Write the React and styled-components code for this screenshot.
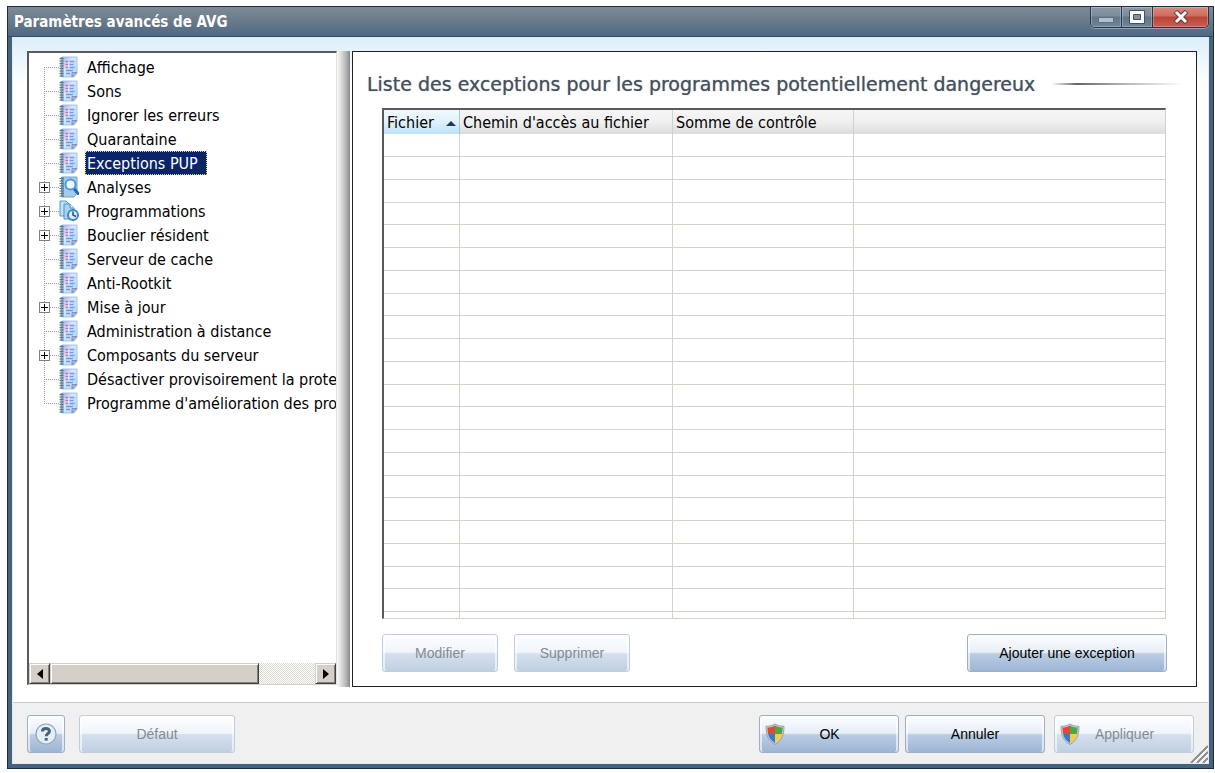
import React, { useState } from "react"
import styled, { createGlobalStyle, css } from "styled-components"

const GlobalStyle = createGlobalStyle`
  * {
    box-sizing: border-box;
  }
  body {
    margin: 0;
    background: #fff;
    font-family: "DejaVu Sans Condensed", "DejaVu Sans", Tahoma, sans-serif;
    font-size: 16px;
    color: #000;
  }
  button {
    font: inherit;
    color: inherit;
    padding: 0;
    margin: 0;
  }
  svg {
    flex: none;
  }
`
const Page = styled.div`
  display: flex;
  min-height: 100vh;
  padding: 6px 1px 4px 7px;
`
const Window = styled.main`
  flex: 1;
  min-width: 0;
  display: flex;
  flex-direction: column;
  border: 1px solid #1b2f43;
  background: #46627e;
`
const TitleBar = styled.header`
  display: flex;
  justify-content: space-between;
  align-items: flex-start;
  height: 30px;
  padding: 0 4px 0 6px;
  border-bottom: 1px solid #2f4a66;
  background: linear-gradient(#7d8b97, #6d7d8c 40%, #4e6984);
  h1 {
    margin: 0;
    font-size: 15px;
    line-height: 30px;
    font-weight: bold;
    color: #fff;
  }
`
const WindowControls = styled.div`
  display: flex;
  height: 21px;
  border: 1px solid #22374c;
  border-top: 0;
  border-radius: 0 0 5px 5px;
  box-shadow: 0 1px 0 #93a3b1;
  overflow: hidden;
`
const ControlButton = styled.button`
  display: flex;
  align-items: center;
  justify-content: center;
  width: ${({ $close }) => ($close ? "55px" : "31px")};
  border: 0;
  border-right: ${({ $close }) => ($close ? "0" : "1px solid #22374c")};
  background: ${({ $close }) =>
    $close
      ? "linear-gradient(#d98a80, #cf6a5f 45%, #bb4336 50%, #c85f50)"
      : "linear-gradient(#8d9aa6, #7b8b9a 45%, #627589 50%, #70859a)"};
  box-shadow: inset 0 0 0 1px rgba(255, 255, 255, 0.25);
`
const Client = styled.div`
  flex: 1;
  display: flex;
  flex-direction: column;
  margin: 0 4px 4px;
  background: #fff linear-gradient(#dceefa, #fff 48px) no-repeat;
  border: solid #dcebf5;
  border-width: 0 1px 1px;
`
const Body = styled.div`
  flex: 1;
  display: flex;
  padding: 14px 11px 15px 14px;
`
const TreePanel = styled.nav`
  flex: none;
  display: flex;
  flex-direction: column;
  justify-content: space-between;
  width: 310px;
  margin-bottom: 2px;
  border: solid #5a5a5a;
  border-width: 2px 1px 1px 2px;
  border-right-color: #e4e2dc;
  border-bottom-color: #d4d0c8;
  background: #fff;
`
const TreeList = styled.ul`
  list-style: none;
  margin: 0;
  padding: 2px 0 0 10px;
  overflow: hidden;
`
const TreeRow = styled.li`
  display: flex;
  align-items: center;
  height: 24px;
`
const Rail = styled.div`
  flex: none;
  display: flex;
  align-items: center;
  width: 20px;
  height: 24px;
  background-repeat: no-repeat;
  background-image: repeating-linear-gradient(
      #999 0 1px,
      transparent 1px 2px
    ),
    repeating-linear-gradient(90deg, #999 0 1px, transparent 1px 2px);
  background-size: 1px ${({ $edge }) => ($edge ? "12px" : "24px")}, 15px 1px;
  background-position: 5px ${({ $edge }) => ($edge === "first" ? "12px" : "0")},
    5px 12px;
`
const Expander = styled.button`
  display: flex;
  width: 11px;
  height: 11px;
  border: 1px solid #808080;
  background: #fff;
`
const TreeLabel = styled.button`
  flex: none;
  height: 24px;
  margin-left: 6px;
  padding: 1px 8px 0 1px;
  border: 1px solid transparent;
  background: none;
  white-space: nowrap;
  line-height: 21px;
  ${({ $selected }) =>
    $selected &&
    css`
      border: 1px dotted #e6d98a;
      background: #0a246a;
      color: #fff;
    `}
`
const ScrollBar = styled.div`
  display: flex;
  height: 21px;
  background: repeating-conic-gradient(#fff 0 25%, #dedad3 0 50%) 0 0 / 2px 2px;
`
const raised = css`
  border: 1px solid;
  border-color: #d4d0c8 #404040 #404040 #d4d0c8;
  background: #d4d0c8;
  box-shadow: inset 1px 1px 0 #fff, inset -1px -1px 0 #808080;
`
const ScrollArrow = styled.button`
  display: flex;
  align-items: center;
  justify-content: center;
  width: 21px;
  ${raised}
`
const ScrollThumb = styled.div`
  width: 68%;
  ${raised}
`
const ScrollTrack = styled.div`
  flex: 1;
`
const Splitter = styled.div`
  flex: none;
  width: 13px;
  margin-right: 2px;
  background: linear-gradient(90deg, #fafafa, #dedede 30%, #b4b4b4 70%, #888);
`
const Panel = styled.section`
  flex: 1;
  min-width: 0;
  display: flex;
  flex-direction: column;
  padding: 0 14px 14px;
  border: 1px solid #222;
  background: #fff;
`
const Heading = styled.div`
  display: flex;
  align-items: center;
  gap: 16px;
  height: 56px;
  padding-top: 8px;
  h2 {
    margin: 0;
    font-family: "DejaVu Sans", Verdana, sans-serif;
    font-size: 19px;
    line-height: 24px;
    font-weight: normal;
    text-shadow: 0 0 1px rgba(70, 80, 92, 0.7);
    white-space: nowrap;
    color: #46505c;
  }
`
const Rule = styled.div`
  flex: 1;
  height: 2px;
  background: linear-gradient(90deg, transparent, #666 20%, #aaa 50%, transparent);
`
const TableBox = styled.div`
  flex: 1 1 0;
  min-height: 120px;
  margin: 0 16px 0 15px;
  overflow: hidden;
  border: solid #5a5a5a;
  border-width: 2px 1px 1px 2px;
  border-right-color: #d4d0c8;
  border-bottom-color: #d4d0c8;
`
const Table = styled.table`
  width: 100%;
  table-layout: fixed;
  border-collapse: separate;
  border-spacing: 0;
`
const HeadCell = styled.th`
  width: ${({ $width }) => $width || "auto"};
  height: 24px;
  padding: 2px 3px 0;
  border-right: 1px solid #d0d0d0;
  background: linear-gradient(#f6f6f6, #f0f0f0 50%, #dcdcdc);
  font-weight: normal;
  line-height: 22px;
  text-align: left;
  white-space: nowrap;
  ${({ $sorted }) =>
    $sorted &&
    css`
      border-right-color: #9ccbe8;
      background: linear-gradient(#f2f9fd, #e1f1fb 50%, #bfe2f7);
    `}
  &:last-child {
    border-right: 0;
  }
  div {
    display: flex;
    align-items: center;
    justify-content: space-between;
  }
`
const Row = styled.tr`
  height: 23px;
  &:nth-child(4n) {
    height: 22px;
  }
`
const Cell = styled.td`
  padding: 0;
  border: solid #d4d2ca;
  border-width: 0 1px 1px 0;
  &:last-child {
    border-right: 0;
  }
`
const PanelActions = styled.div`
  display: flex;
  gap: 16px;
  margin: 15px 15px 0;
`
const FooterWrapper = styled.div`
  position: relative;
`
const Footer = styled.footer`
  display: flex;
  align-items: center;
  gap: 6px;
  height: 61px;
  padding: 1px 14px 0;
  border-top: 1px solid #ccc;
  background: #f0f0f0;
`
const Button = styled.button`
  display: flex;
  align-items: center;
  justify-content: center;
  width: ${({ $width }) => $width};
  height: 38px;
  border: 1px solid #9dafc6;
  border-radius: 3px;
  background: linear-gradient(#fdfeff, #e6eef7 48%, #bccde2 52%, #9db5d6);
  box-shadow: inset 2px 0 0 rgba(255, 255, 255, 0.6),
    inset -2px 0 0 rgba(255, 255, 255, 0.6);
  font-family: "Liberation Sans", Arial, sans-serif;
  font-size: 14px;
  white-space: nowrap;
  &:disabled {
    border-color: #bfcddd;
    background: linear-gradient(#fdfeff, #f0f5fb 48%, #d5e0ed 52%, #bfcfe3);
    color: #858b92;
  }
  svg {
    margin-left: 5px;
  }
  span {
    flex: 1;
    padding-right: 24px;
  }
`
const HelpButton = styled(Button)`
  margin-right: 8px;
  svg {
    margin: 0;
  }
`
const ButtonGroup = styled.div`
  display: flex;
  margin-right: 3px;
`
const Spacer = styled.div`
  flex: 1;
`
const Grip = styled.div`
  position: absolute;
  right: 0;
  bottom: 0;
  display: flex;
`

const NotebookIcon = () => (
  <svg width="20" height="22" viewBox="0 0 20 22" aria-hidden="true">
    <defs>
      <linearGradient id="sheet" x1="0" y1="0" x2="1" y2="1">
        <stop offset="0" stopColor="#9fb2e6" />
        <stop offset="0.400" stopColor="#d6e9fc" />
        <stop offset="1" stopColor="#a4daf2" />
      </linearGradient>
    </defs>
    <path d="M3 1h15v16l-3 4H3z" fill="url(#sheet)" stroke="#9db4dc" strokeWidth="0.800" />
    <path d="M3 1v20" stroke="#8c9cc0" strokeWidth="3" />
    <path
      d="M0.500 2.500h4M0.500 5h4M0.500 7.500h4M0.500 10h4M0.500 12.500h4M0.500 15h4M0.500 17.500h4M0.500 20h4"
      stroke="#4c8289"
      strokeWidth="1.200"
    />
    <path d="M6.500 5.500h2.500M6.500 8.500h2.500M6.500 11.500h2.500" stroke="#dc5cbc" strokeWidth="1.600" />
    <path
      d="M10.500 5.500h5M10.500 8.500h4M10.500 11.500h5M7 14.500h7M7 17.500h4"
      stroke="#7098e6"
      strokeWidth="1.400"
    />
    <path d="M13 21v-4.500h5z" fill="#b9b3dc" stroke="#8079b2" strokeWidth="0.800" />
  </svg>
)

const SearchNotebookIcon = () => (
  <svg width="20" height="22" viewBox="0 0 20 22" aria-hidden="true">
    <path d="M3 1h15v16l-3 4H3z" fill="#a4cbee" stroke="#7f9fcb" />
    <path d="M3.500 1v20" stroke="#7f93bd" strokeWidth="3" />
    <path
      d="M0.500 2.500h4M0.500 5h4M0.500 7.500h4M0.500 10h4M0.500 12.500h4M0.500 15h4M0.500 17.500h4M0.500 20h4"
      stroke="#3f7f86"
      strokeWidth="1.200"
    />
    <path d="M15 12.500l4 5" stroke="#1f6cb4" strokeWidth="3" strokeLinecap="round" />
    <circle cx="11.500" cy="8.500" r="5" fill="#f2faff" stroke="#4f9ad8" strokeWidth="2" />
  </svg>
)

const ScheduleIcon = () => (
  <svg width="20" height="22" viewBox="0 0 20 22" aria-hidden="true">
    <path d="M1 1h6l3 3v12H1z" fill="#c3e0f6" stroke="#5596cc" />
    <path d="M5 4h6l4 4v11H5z" fill="#a9d3f2" stroke="#4b90cc" />
    <path d="M11 4v4h4" fill="#e8f5fd" stroke="#4b90cc" />
    <circle cx="14" cy="15" r="5" fill="#dceefa" stroke="#3b8acb" strokeWidth="2" />
    <path d="M14 11.500V15l3 1.500" fill="none" stroke="#24588e" strokeWidth="1.600" />
    <path
      d="M14 9v1.500M14 19.500V21M8.500 15H10M18 15h1.500"
      stroke="#3b8acb"
      strokeWidth="1.800"
    />
  </svg>
)

const ShieldIcon = () => (
  <svg width="20" height="22" viewBox="0 0 20 22" aria-hidden="true">
    <defs>
      <clipPath id="shield">
        <path d="M10 2.500c2.500 1.600 5 2 7.500 2 0 7-1.500 12-7.500 15.500C4 16.500 2.500 11.500 2.500 4.500c2.500 0 5-.4 7.500-2z" />
      </clipPath>
    </defs>
    <path
      d="M10 1c3 1.800 6 2.300 9 2.300 0 8.700-2 14.200-9 18.200C3 17.500 1 12 1 3.300 4 3.300 7 2.800 10 1z"
      fill="#c9cdd0"
      stroke="#8d949a"
      strokeWidth="0.800"
    />
    <g clipPath="url(#shield)">
      <path d="M0 0h10v11H0z" fill="#dc4a3a" />
      <path d="M10 0h10v11H10z" fill="#4fa648" />
      <path d="M0 11h10v11H0z" fill="#3a78d0" />
      <path d="M10 11h10v11H10z" fill="#f4cf3c" />
    </g>
  </svg>
)

const HelpIcon = () => (
  <svg width="24" height="24" viewBox="0 0 24 24" aria-hidden="true">
    <circle cx="12" cy="12" r="10" fill="#e4eef7" stroke="#8fa6bd" strokeWidth="1.200" />
    <path
      d="M8.500 9.500C8.500 5.600 15.500 5.700 15.500 9.300 15.500 11.500 12.200 11.600 12.200 14.300"
      fill="none"
      stroke="#48627e"
      strokeWidth="3"
    />
    <path d="M10.700 16h3v2.600h-3z" fill="#48627e" />
  </svg>
)

const icons = {
  notebook: NotebookIcon,
  search: SearchNotebookIcon,
  schedule: ScheduleIcon,
}

const items = [
  { name: "Affichage" },
  { name: "Sons" },
  { name: "Ignorer les erreurs" },
  { name: "Quarantaine" },
  { name: "Exceptions PUP" },
  { name: "Analyses", icon: "search", children: true },
  { name: "Programmations", icon: "schedule", children: true },
  { name: "Bouclier résident", children: true },
  { name: "Serveur de cache" },
  { name: "Anti-Rootkit" },
  { name: "Mise à jour", children: true },
  { name: "Administration à distance" },
  { name: "Composants du serveur", children: true },
  { name: "Désactiver provisoirement la prote" },
  { name: "Programme d'amélioration des pro" },
]

const rows = Array.from({ length: 22 }, (_, i) => i)

const edgeOf = index => {
  if (index === 0) return "first"
  return index === items.length - 1 ? "last" : undefined
}

const SettingsTree = () => {
  const [selected, setSelected] = useState("Exceptions PUP")
  return (
    <TreePanel aria-label="Paramètres">
      <TreeList>
        {items.map((item, index) => {
          const Icon = icons[item.icon || "notebook"]
          return (
            <TreeRow key={item.name}>
              <Rail $edge={edgeOf(index)}>
                {item.children && (
                  <Expander aria-label={`Développer ${item.name}`}>
                    <svg width="9" height="9" viewBox="0 0 9 9">
                      <path d="M1 4.500h7M4.500 1v7" stroke="#000" />
                    </svg>
                  </Expander>
                )}
              </Rail>
              <Icon />
              <TreeLabel
                $selected={item.name === selected}
                onClick={() => setSelected(item.name)}
              >
                {item.name}
              </TreeLabel>
            </TreeRow>
          )
        })}
      </TreeList>
      <ScrollBar>
        <ScrollArrow aria-label="Défiler à gauche">
          <svg width="6" height="10" viewBox="0 0 6 10">
            <path d="M6 0v10L0 5z" />
          </svg>
        </ScrollArrow>
        <ScrollThumb />
        <ScrollTrack />
        <ScrollArrow aria-label="Défiler à droite">
          <svg width="6" height="10" viewBox="0 0 6 10">
            <path d="M0 0v10l6-5z" />
          </svg>
        </ScrollArrow>
      </ScrollBar>
    </TreePanel>
  )
}

const ExceptionTable = () => (
  <TableBox>
    <Table>
      <thead>
        <tr>
          <HeadCell $width="76px" $sorted aria-sort="ascending">
            <div>
              Fichier
              <svg width="10" height="5" viewBox="0 0 10 5" aria-hidden="true">
                <path d="M5 0l5 5H0z" fill="#1f3a5f" />
              </svg>
            </div>
          </HeadCell>
          <HeadCell $width="213px">Chemin d'accès au fichier</HeadCell>
          <HeadCell $width="181px">Somme de contrôle</HeadCell>
          <HeadCell />
        </tr>
      </thead>
      <tbody>
        {rows.map(row => (
          <Row key={row}>
            <Cell />
            <Cell />
            <Cell />
            <Cell />
          </Row>
        ))}
      </tbody>
    </Table>
  </TableBox>
)

const App = () => {
  return (
    <Page>
      <GlobalStyle />
      <Window>
        <TitleBar>
          <h1>Paramètres avancés de AVG</h1>
          <WindowControls>
            <ControlButton aria-label="Réduire">
              <svg width="16" height="16" viewBox="0 0 16 16">
                <path d="M.5 8.500h15v5H.5z" fill="#b4bfc9" stroke="#5c6f82" />
              </svg>
            </ControlButton>
            <ControlButton aria-label="Agrandir">
              <svg width="16" height="14" viewBox="0 0 16 14">
                <path d="M.5.5h15v13H.5z" fill="#fff" stroke="#3d5268" />
                <path d="M4.500 4.500h7v5h-7z" fill="#8593a0" stroke="#3d5268" />
              </svg>
            </ControlButton>
            <ControlButton $close aria-label="Fermer">
              <svg width="16" height="14" viewBox="0 0 16 14">
                <path d="M2.500 1.500l11 11M13.500 1.500l-11 11" stroke="#6b3a40" strokeWidth="5" />
                <path d="M3 2l10 10M13 2L3 12" stroke="#fff" strokeWidth="3" />
              </svg>
            </ControlButton>
          </WindowControls>
        </TitleBar>
        <Client>
          <Body>
            <SettingsTree />
            <Splitter />
            <Panel>
              <Heading>
                <h2>Liste des exceptions pour les programmes potentiellement dangereux</h2>
                <Rule />
              </Heading>
              <ExceptionTable />
              <PanelActions>
                <Button $width="116px" disabled>
                  Modifier
                </Button>
                <Button $width="116px" disabled>
                  Supprimer
                </Button>
                <Spacer />
                <Button $width="200px">Ajouter une exception</Button>
              </PanelActions>
            </Panel>
          </Body>
          <FooterWrapper>
            <Footer>
              <HelpButton $width="38px" aria-label="Aide">
                <HelpIcon />
              </HelpButton>
              <Button $width="156px" disabled>
                Défaut
              </Button>
              <Spacer />
              <Button $width="140px">
                <ShieldIcon />
                <span>OK</span>
              </Button>
              <ButtonGroup>
                <Button $width="140px">Annuler</Button>
              </ButtonGroup>
              <Button $width="140px" disabled>
                <ShieldIcon />
                <span>Appliquer</span>
              </Button>
            </Footer>
            <Grip>
              <svg width="18" height="18" viewBox="0 0 18 18" aria-hidden="true">
                <path d="M1 18L18 1M7 18L18 7M13 18l5-5" stroke="#8a8a8a" strokeWidth="2" />
                <path d="M3 18L18 3M9 18l9-9M15 18l3-3" stroke="#fff" />
              </svg>
            </Grip>
          </FooterWrapper>
        </Client>
      </Window>
    </Page>
  )
}

export default App
